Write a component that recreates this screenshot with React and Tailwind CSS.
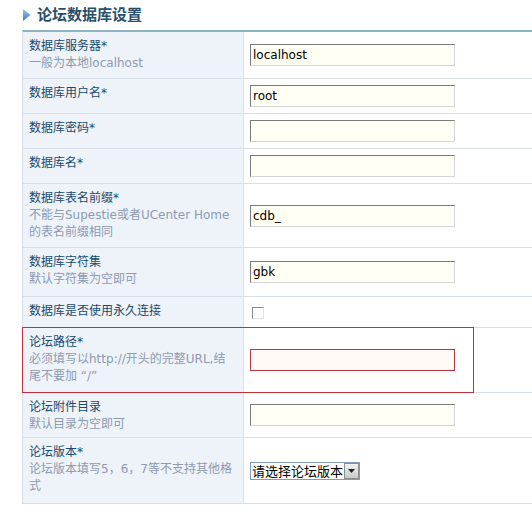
import React from 'react'

const font = { fontFamily: '"DejaVu Sans", "Noto Sans CJK SC", sans-serif' }

function TextInput({ value = '', error = false }) {
  return (
    <div
      className={
        error
          ? 'w-[205px] h-[22px] border border-[#b8343f] bg-[#fffaf5]'
          : 'w-[205px] h-[22px] border border-t-[#7a7a7a] border-l-[#7a7a7a] border-r-[#d6d6d6] border-b-[#d6d6d6] bg-[#fffff4]'
      }
    >
      <div className="px-[2px] text-[12px] leading-[20px] text-black">{value}</div>
    </div>
  )
}

function Row({ label, hint, children, className = '' }) {
  return (
    <div className={'flex border-b border-[#d8dee6] ' + className}>
      <div className="w-[221px] shrink-0 bg-[#eef3fa] border-r border-[#d9e2ec] px-[6px] py-[6px] text-[12px] leading-[17px]">
        <div className="text-[#174a6e]">{label}</div>
        {hint && <div className="text-[#8d9ab0]">{hint}</div>}
      </div>
      <div className="flex-1 flex items-center px-[6px]">{children}</div>
    </div>
  )
}

export default function App() {
  return (
    <div className="w-[532px] h-[512px] bg-white overflow-hidden" style={font}>
      {/* title */}
      <div className="flex items-start gap-[6px] pl-[23px] pt-[3px] h-[30px]">
        <svg width="8" height="12" viewBox="0 0 8 12" className="mt-[6px]">
          <defs>
            <linearGradient id="g" x1="0" y1="0" x2="0" y2="1">
              <stop offset="0" stopColor="#9cc3ea" />
              <stop offset="1" stopColor="#3a78c0" />
            </linearGradient>
          </defs>
          <path d="M0 0 L7.5 6 L0 12 Z" fill="url(#g)" />
        </svg>
        <span className="text-[15px] font-bold text-[#2a4f6e] leading-[22px]" style={{ fontFamily: '"Noto Sans CJK SC", sans-serif' }}>
          论坛数据库设置
        </span>
      </div>

      {/* table */}
      <div className="ml-[22px] border-t-2 border-[#8db4c6] border-l border-l-[#d8dee6]">
        <Row label="数据库服务器*" hint="一般为本地localhost">
          <TextInput value="localhost" />
        </Row>
        <Row label="数据库用户名*" className="h-[35px]">
          <TextInput value="root" />
        </Row>
        <Row label="数据库密码*" className="h-[35px]">
          <TextInput />
        </Row>
        <Row label="数据库名*" className="h-[35px]">
          <TextInput />
        </Row>
        <Row
          label="数据库表名前缀*"
          hint={<>不能与Supestie或者UCenter Home<br />的表名前缀相同</>}
        >
          <TextInput value="cdb_" />
        </Row>
        <Row label="数据库字符集" hint="默认字符集为空即可" className="h-[49px]">
          <TextInput value="gbk" />
        </Row>
        <Row label="数据库是否使用永久连接" className="h-[31px]">
          <div className="ml-[2px] mt-[1px] w-[12px] h-[12px] border border-t-[#8a8a8a] border-l-[#8a8a8a] border-r-[#e2e2e2] border-b-[#e2e2e2] bg-white" />
        </Row>
        <div className="relative">
          <Row
            label="论坛路径*"
            hint={<>必须填写以http://开头的完整URL,结<br />尾不要加 “/”</>}
            className="h-[65px]"
          >
            <TextInput error />
          </Row>
          <div className="absolute left-[-1px] top-[-1px] w-[452px] h-[66px] border border-[#c0303c] pointer-events-none" />
        </div>
        <Row label="论坛附件目录" hint="默认目录为空即可" className="h-[45px]">
          <TextInput />
        </Row>
        <Row
          label="论坛版本*"
          hint={<>论坛版本填写5，6，7等不支持其他格<br />式</>}
          className="h-[66px]"
        >
          <div className="flex items-center h-[18px] border border-[#7f9db9] bg-white">
            <span className="px-[1px] text-[13px] leading-[16px] text-black" style={{ fontFamily: '"Noto Sans CJK SC", sans-serif' }}>
              请选择论坛版本
            </span>
            <div className="w-[15px] h-[16px] flex items-center justify-center bg-gradient-to-b from-[#f2f2f2] to-[#c9c9c9] border border-[#8c8c8c]">
              <svg width="7" height="4" viewBox="0 0 7 4">
                <path d="M0 0 H7 L3.5 4 Z" fill="#222" />
              </svg>
            </div>
          </div>
        </Row>
      </div>
    </div>
  )
}
